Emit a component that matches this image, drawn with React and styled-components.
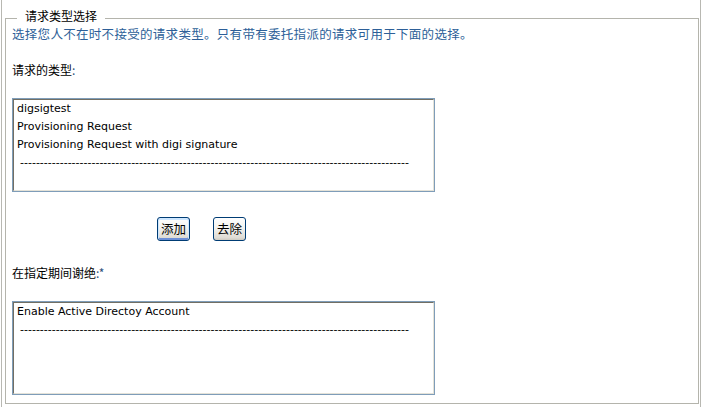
import React from 'react'
import styled, { createGlobalStyle } from 'styled-components'

const GlobalStyle = createGlobalStyle`
  html, body {
    margin: 0;
    padding: 0;
    background: #ffffff;
  }
  body {
    font-family: "DejaVu Sans", "Noto Sans CJK SC", sans-serif;
    font-size: 11px;
    color: #000000;
  }
`

const Frame = styled.div`
  box-sizing: border-box;
  margin-left: 1px;
  width: 700px;
  height: 407px;
  padding: 10px 1px 0 3px;
  border-left: 1px solid #b8b8b2;
  border-right: 1px solid #b8b8b2;
`

const Group = styled.fieldset`
  box-sizing: border-box;
  margin: 0;
  height: 394px;
  padding: 0 0 0 6px;
  border: 1px solid #b4b4ac;
  min-width: 0;
`

const Legend = styled.legend`
  margin-left: 5px;
  padding: 0 8px 4px;
  font-family: "Noto Sans CJK SC", sans-serif;
  font-size: 12px;
  line-height: 12px;
  color: #000000;
`

const Intro = styled.div`
  padding-top: 1px;
  font-family: "Noto Sans CJK SC", sans-serif;
  font-size: 12.5px;
  letter-spacing: 0.3px;
  line-height: 14px;
  color: #2d5f98;
`

const FieldLabel = styled.div`
  margin-top: ${p => p.$top}px;
  font-family: "Noto Sans CJK SC", sans-serif;
  font-size: 12px;
  line-height: 16px;
  color: #000000;
`

const Mark = styled.span`
  color: #2b4f7a;
`

const ListBox = styled.div`
  box-sizing: border-box;
  margin-top: 20px;
  width: 423px;
  height: 94px;
  border: 1px solid #7f9db9;
  background: #ffffff;
  overflow: hidden;
`

const ListInner = styled.div`
  box-sizing: border-box;
  height: 100%;
  padding: 0 3px;
  border-top: 1px solid #716f64;
  border-left: 1px solid #716f64;
  border-right: 1px solid #e4e2d8;
  border-bottom: 1px solid #e4e2d8;
`

const Item = styled.div`
  height: 18px;
  line-height: 18px;
  white-space: nowrap;
  font-family: "DejaVu Sans", sans-serif;
  font-size: 11px;
  color: #000000;
`

const Divider = styled(Item)`
  padding-left: 3px;
`

const ButtonRow = styled.div`
  display: flex;
  gap: 23px;
  margin-top: 25px;
  padding-left: 145px;
`

const Button = styled.button`
  box-sizing: border-box;
  height: 24px;
  min-width: 32px;
  padding: 0 3px;
  border: 1px solid #003c74;
  border-radius: 3px;
  background: linear-gradient(#ffffff 0%, #f3f3ef 45%, #dedbd4 90%, #cdcac0 100%);
  box-shadow: ${p => (p.$default ? 'inset 0 1px 0 1px #cee7ff, inset 0 -1px 0 1px #6c8fd8' : 'none')};
  font-family: "Noto Sans CJK SC", sans-serif;
  font-size: 12.5px;
  line-height: 20px;
  color: #000000;
`

const dashes = ' ' + '-'.repeat(98)

export default function App() {
  return (
    <>
      <GlobalStyle />
      <Frame>
        <Group>
          <Legend>请求类型选择</Legend>
          <Intro>选择您人不在时不接受的请求类型。只有带有委托指派的请求可用于下面的选择。</Intro>

          <FieldLabel $top={21}>
            请求的类型<Mark>:</Mark>
          </FieldLabel>
          <ListBox>
            <ListInner>
              <Item>digsigtest</Item>
              <Item>Provisioning Request</Item>
              <Item>Provisioning Request with digi signature</Item>
              <Divider>{dashes}</Divider>
            </ListInner>
          </ListBox>

          <ButtonRow>
            <Button $default>添加</Button>
            <Button>去除</Button>
          </ButtonRow>

          <FieldLabel $top={24}>
            在指定期间谢绝<Mark>:*</Mark>
          </FieldLabel>
          <ListBox>
            <ListInner>
              <Item>Enable Active Directoy Account</Item>
              <Divider>{dashes}</Divider>
            </ListInner>
          </ListBox>
        </Group>
      </Frame>
    </>
  )
}
